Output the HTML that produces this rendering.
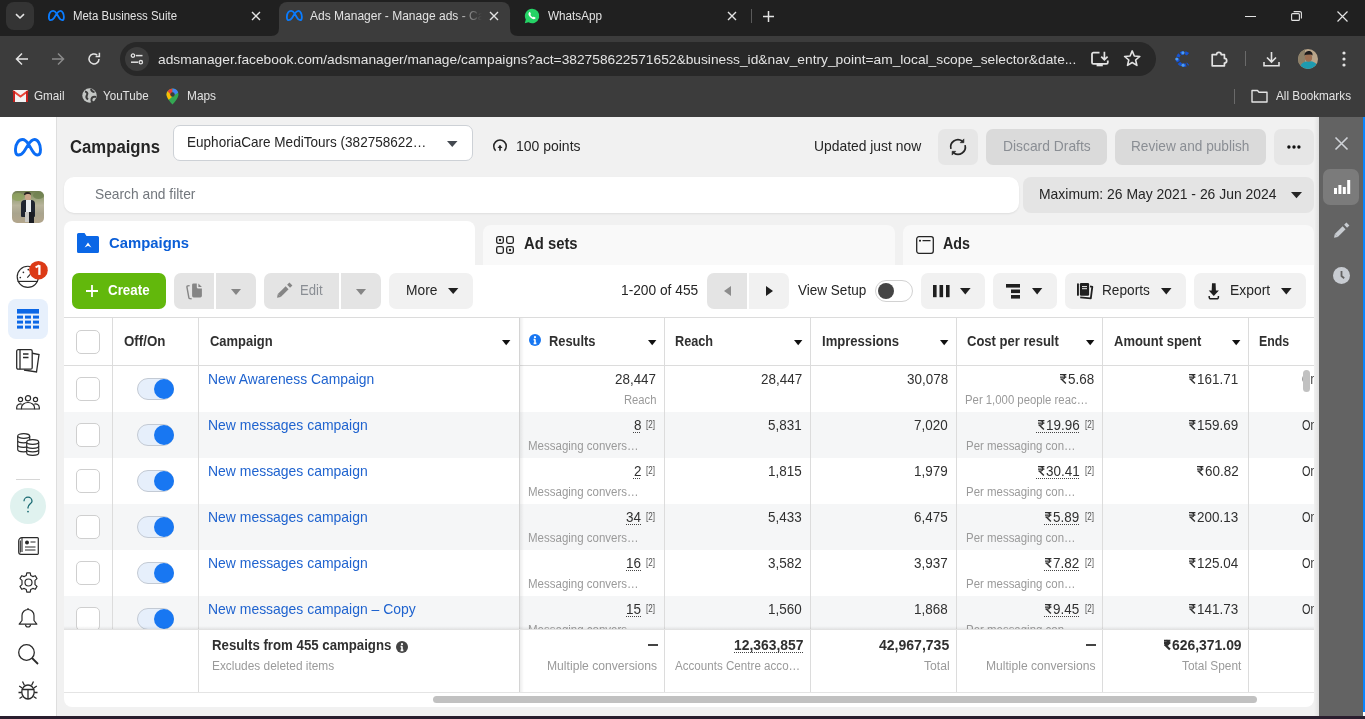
<!DOCTYPE html>
<html><head><meta charset="utf-8">
<style>
*{box-sizing:border-box;margin:0;padding:0}
html,body{width:1365px;height:719px;overflow:hidden;background:#f1f1f1;font-family:"Liberation Sans",sans-serif}
.a{position:absolute}
.t{position:absolute;white-space:nowrap;line-height:1}
svg{position:absolute;overflow:visible}
</style></head><body>
<div class="a" style="left:0px;top:0px;width:1365px;height:36px;background:#202020;"></div>
<div class="a" style="left:0px;top:36px;width:1365px;height:81px;background:#3c3c3c;"></div>
<div class="a" style="left:6px;top:2px;width:28px;height:28px;background:#343434;border-radius:8px;"></div>
<svg style="left:15px;top:13px;" width="10" height="7" viewBox="0 0 10 7"><path d="M1 1.2 L5 5 L9 1.2" stroke="#e3e3e3" stroke-width="1.6" fill="none"/></svg>
<svg style="left:48px;top:10px;" width="17" height="12" viewBox="0 0 17 12"><g transform="scale(0.6)"><path d="M4.2 17C1.8 17 1.3 13.5 1.5 11C1.9 5.5 4.8 1.5 8.5 1.5C11.2 1.5 12.8 3.5 14.5 6.3L18.5 13C20 15.6 21.5 17 23.5 17C25.8 17 26.5 14.5 26.5 11.5C26.5 6 23.8 1.5 20.5 1.5C18 1.5 16.2 3.5 14.2 6.8L10 13.5C8.5 15.8 6.5 17 4.2 17z" stroke="#0a7cff" stroke-width="3" fill="none"/></g></svg>
<div class="t" style="top:10.41px;font-size:12.5px;color:#e3e3e3;left:72.70px;transform:scaleX(0.9127);transform-origin:0 0;">Meta Business Suite</div>
<svg style="left:251px;top:11px;" width="10" height="10" viewBox="0 0 10 10"><path d="M1 1L9 9M9 1L1 9" stroke="#e3e3e3" stroke-width="1.4"/></svg>
<div class="a" style="left:279px;top:2px;width:231px;height:34px;background:#3c3c3c;border-radius:8px 8px 0 0;"></div>
<svg style="left:271px;top:28px;" width="8" height="8" viewBox="0 0 8 8"><path d="M0 8 Q8 8 8 0 L8 8z" fill="#3c3c3c"/></svg>
<svg style="left:510px;top:28px;" width="8" height="8" viewBox="0 0 8 8"><path d="M8 8 Q0 8 0 0 L0 8z" fill="#3c3c3c"/></svg>
<svg style="left:286px;top:10px;" width="17" height="12" viewBox="0 0 17 12"><g transform="scale(0.6)"><path d="M4.2 17C1.8 17 1.3 13.5 1.5 11C1.9 5.5 4.8 1.5 8.5 1.5C11.2 1.5 12.8 3.5 14.5 6.3L18.5 13C20 15.6 21.5 17 23.5 17C25.8 17 26.5 14.5 26.5 11.5C26.5 6 23.8 1.5 20.5 1.5C18 1.5 16.2 3.5 14.2 6.8L10 13.5C8.5 15.8 6.5 17 4.2 17z" stroke="#0a7cff" stroke-width="3" fill="none"/></g></svg>
<div class="a" style="left:300px;top:0;width:182px;height:34px;overflow:hidden;-webkit-mask-image:linear-gradient(90deg,#000 86%,transparent 100%)">
<div class="t" style="left:10px;top:10.41px;font-size:12.5px;color:#e3e3e3;transform:scaleX(0.9616);transform-origin:0 0">Ads Manager - Manage ads - Campaigns</div>
</div>
<svg style="left:489px;top:11px;" width="10" height="10" viewBox="0 0 10 10"><path d="M1 1L9 9M9 1L1 9" stroke="#e3e3e3" stroke-width="1.4"/></svg>
<svg style="left:524px;top:8px;" width="16" height="16" viewBox="0 0 16 16"><path d="M8 0.8A7.2 7.2 0 0 0 1.8 11.6L0.8 15.2 4.5 14.2A7.2 7.2 0 1 0 8 0.8z" fill="#25d366"/><path d="M5.2 4.2c.3-.3.8-.3 1 .1l.7 1.4c.1.3 0 .5-.2.7l-.4.4c.5 1.1 1.4 2 2.5 2.5l.4-.4c.2-.2.5-.3.7-.2l1.4.7c.3.2.4.7.1 1-.9 1-2.3 1-3.6.2A8 8 0 0 1 5 7.8c-.8-1.3-.7-2.7.2-3.6z" fill="#fff"/></svg>
<div class="t" style="top:10.41px;font-size:12.5px;color:#e3e3e3;left:548.00px;transform:scaleX(0.9365);transform-origin:0 0;">WhatsApp</div>
<svg style="left:727px;top:11px;" width="10" height="10" viewBox="0 0 10 10"><path d="M1 1L9 9M9 1L1 9" stroke="#e3e3e3" stroke-width="1.4"/></svg>
<div class="a" style="left:751px;top:9px;width:1px;height:14px;background:#5a5a5a;"></div>
<svg style="left:763px;top:11px;" width="11" height="11" viewBox="0 0 11 11"><path d="M5.5 0V11M0 5.5H11" stroke="#e3e3e3" stroke-width="1.5"/></svg>
<div class="a" style="left:1245px;top:16px;width:11px;height:1px;background:#e3e3e3;"></div>
<svg style="left:1291px;top:11px;" width="11" height="10" viewBox="0 0 11 10"><rect x="0.6" y="2.6" width="7.8" height="6.8" rx="1" stroke="#e3e3e3" stroke-width="1.1" fill="none"/><path d="M2.6 0.6H9a1.4 1.4 0 0 1 1.4 1.4V7.4" stroke="#e3e3e3" stroke-width="1.1" fill="none"/></svg>
<svg style="left:1337px;top:11px;" width="11" height="11" viewBox="0 0 11 11"><path d="M0.5 0.5L10.5 10.5M10.5 0.5L0.5 10.5" stroke="#e3e3e3" stroke-width="1.2"/></svg>
<svg style="left:15px;top:52px;" width="14" height="14" viewBox="0 0 14 14"><path d="M13 7H1.8M7 1.5L1.5 7L7 12.5" stroke="#e3e3e3" stroke-width="1.5" fill="none"/></svg>
<svg style="left:51px;top:52px;" width="14" height="14" viewBox="0 0 14 14"><path d="M1 7H12.2M7 1.5L12.5 7L7 12.5" stroke="#8a8a8a" stroke-width="1.5" fill="none"/></svg>
<svg style="left:87px;top:52px;" width="14" height="14" viewBox="0 0 14 14"><path d="M12 7A5 5 0 1 1 10.2 3.1" stroke="#e3e3e3" stroke-width="1.5" fill="none"/><path d="M12.4 0.8V4.6H8.6" stroke="#e3e3e3" stroke-width="1.5" fill="none"/></svg>
<div class="a" style="left:120px;top:42px;width:1036px;height:34px;background:#282828;border-radius:17px;"></div>
<div class="a" style="left:125px;top:47px;width:24px;height:24px;background:#3c3c3c;border-radius:12px;"></div>
<svg style="left:130px;top:53px;" width="14" height="12" viewBox="0 0 14 12"><circle cx="3" cy="2.6" r="1.7" stroke="#e3e3e3" stroke-width="1.3" fill="none"/><path d="M6 2.6H12.5" stroke="#e3e3e3" stroke-width="1.5"/><circle cx="10.8" cy="9.2" r="1.7" stroke="#e3e3e3" stroke-width="1.3" fill="none"/><path d="M1 9.2H8" stroke="#e3e3e3" stroke-width="1.5"/></svg>
<div class="t" style="top:52.57px;font-size:13.5px;color:#e3e3e3;left:157.50px;transform:scaleX(1.0196);transform-origin:0 0;">adsmanager.facebook.com/adsmanager/manage/campaigns?act=382758622571652&amp;business_id&amp;nav_entry_point=am_local_scope_selector&amp;date...</div>
<svg style="left:1091px;top:51px;" width="18" height="16" viewBox="0 0 18 16"><path d="M8.5 1.7H2.4A1.4 1.4 0 0 0 1 3.1V11.5A1.4 1.4 0 0 0 2.4 12.9H15.4A1.4 1.4 0 0 0 16.8 11.5V9.6" stroke="#e3e3e3" stroke-width="1.8" fill="none"/><rect x="5.6" y="12.9" width="6.2" height="2.4" fill="#e3e3e3"/><path d="M13.4 0.7V8.6M10.2 5.6L13.4 8.8L16.6 5.6" stroke="#e3e3e3" stroke-width="1.7" fill="none"/></svg>
<svg style="left:1124px;top:50.4px;" width="17" height="16" viewBox="0 0 17 16"><path d="M8.20 0.90L10.32 5.99L15.81 6.43L11.62 10.01L12.90 15.37L8.20 12.50L3.50 15.37L4.78 10.01L0.59 6.43L6.08 5.99z" stroke="#e3e3e3" stroke-width="1.6" fill="none" stroke-linejoin="round"/></svg>
<svg style="left:1175px;top:51px;" width="16" height="16" viewBox="0 0 16 16"><path d="M13 3.2A6.3 6.3 0 1 0 13 12.8" stroke="#1553d6" stroke-width="3.4" fill="none" stroke-dasharray="3.2 1.3"/><circle cx="8" cy="1.8" r="1.6" fill="#4a9cf5"/><circle cx="8" cy="14.2" r="1.6" fill="#4a9cf5"/><circle cx="1.8" cy="8" r="1.6" fill="#4a9cf5"/></svg>
<svg style="left:1211px;top:50px;" width="17" height="17" viewBox="0 0 17 17"><path d="M1.2 4.6H5.6A2.3 2.3 0 0 1 10.2 4.6H13.4V8.4A2.3 2.3 0 0 1 13.4 13V15.8H1.2z" stroke="#e3e3e3" stroke-width="1.7" fill="none" stroke-linejoin="round"/></svg>
<div class="a" style="left:1245px;top:51px;width:1px;height:15px;background:#6a6a6a;"></div>
<svg style="left:1263px;top:51px;" width="17" height="16" viewBox="0 0 17 16"><path d="M8.5 1V11M4 6.5L8.5 11L13 6.5M1 11V14.8H16V11" stroke="#e3e3e3" stroke-width="1.6" fill="none"/></svg>
<svg style="left:1298px;top:49px;" width="20" height="20" viewBox="0 0 20 20"><defs><clipPath id="av"><circle cx="10" cy="10" r="10"/></clipPath></defs><g clip-path="url(#av)"><rect width="20" height="20" fill="#b9a58a"/><rect x="0" y="0" width="7" height="20" fill="#8d8068"/><ellipse cx="11" cy="19" rx="9" ry="7" fill="#1e9bb0"/><ellipse cx="10.5" cy="8.5" rx="3.6" ry="4.3" fill="#9c6f52"/><path d="M6.5 6.5C6.5 3 9 2 11 2S15 3.5 14.5 6.5L13 5.5L8 5.8z" fill="#1d1b1c"/></g></svg>
<svg style="left:1342px;top:51px;" width="4" height="16" viewBox="0 0 4 16"><circle cx="2" cy="2" r="1.6" fill="#e3e3e3"/><circle cx="2" cy="8" r="1.6" fill="#e3e3e3"/><circle cx="2" cy="14" r="1.6" fill="#e3e3e3"/></svg>
<svg style="left:13px;top:90px;" width="15" height="12" viewBox="0 0 15 12"><rect x="0" y="0" width="15" height="12" rx="1" fill="#f2f2f2"/><path d="M0 1L7.5 6.5L15 1" stroke="#ea4335" stroke-width="2" fill="none"/><path d="M1 1V12M14 1V12" stroke="#c5221f" stroke-width="2"/></svg>
<div class="t" style="top:89.61px;font-size:12.5px;color:#e3e3e3;left:34.00px;transform:scaleX(0.9345);transform-origin:0 0;">Gmail</div>
<svg style="left:82px;top:88px;" width="15" height="15" viewBox="0 0 15 15"><circle cx="7.5" cy="7.5" r="7.2" fill="#c4c7c5"/><path d="M3 3.5C5 4 6 5.5 5 7S4 10 6 11.5M9 1C9.5 3 11 4 12.5 4M14 9C12 8.5 10 9 9.5 11S10 14 10.5 14.5" stroke="#3c3c3c" stroke-width="2" fill="none"/></svg>
<div class="t" style="top:89.61px;font-size:12.5px;color:#e3e3e3;left:103.00px;transform:scaleX(0.9282);transform-origin:0 0;">YouTube</div>
<svg style="left:166px;top:88px;" width="13" height="17" viewBox="0 0 13 17"><path d="M6.5 0.5A6 6 0 0 0 .5 6.5C.5 10.5 6.5 16.5 6.5 16.5S12.5 10.5 12.5 6.5A6 6 0 0 0 6.5 .5z" fill="#34a853"/><path d="M6.5 0.5A6 6 0 0 0 1.5 3.2L6.5 8.5z" fill="#ea4335"/><path d="M6.5 0.5A6 6 0 0 1 12.2 4.5L6.5 8.5z" fill="#4285f4"/><path d="M.5 6.5C.5 8 1.5 10 2.8 11.8L6.5 8.5 1.5 3.2A6 6 0 0 0 .5 6.5z" fill="#fbbc04"/><circle cx="6.5" cy="6.5" r="2.2" fill="#3c3c3c"/></svg>
<div class="t" style="top:89.61px;font-size:12.5px;color:#e3e3e3;left:187.00px;transform:scaleX(0.9489);transform-origin:0 0;">Maps</div>
<div class="a" style="left:1234px;top:89px;width:1px;height:15px;background:#6a6a6a;"></div>
<svg style="left:1251px;top:89px;" width="17" height="14" viewBox="0 0 17 14"><path d="M1 1.5H6.5L8 3.2H16V13H1z" stroke="#e3e3e3" stroke-width="1.4" fill="none" stroke-linejoin="round"/></svg>
<div class="t" style="top:89.61px;font-size:12.5px;color:#e3e3e3;left:1276.00px;transform:scaleX(0.9388);transform-origin:0 0;">All Bookmarks</div>
<div class="a" style="left:0px;top:117px;width:56px;height:599px;background:#ffffff;"></div>
<div class="a" style="left:56px;top:117px;width:1px;height:599px;background:#dedede;"></div>
<div class="a" style="left:1314px;top:117px;width:5px;height:599px;background:linear-gradient(90deg,#f1f1f1,#e0e0e0);"></div>
<div class="a" style="left:1319px;top:117px;width:44px;height:599px;background:#636363;"></div>
<div class="a" style="left:1363px;top:117px;width:2px;height:595px;background:#0a84ff;"></div>
<div class="a" style="left:1363px;top:712px;width:2px;height:4px;background:#ffffff;"></div>
<div class="a" style="left:0px;top:716px;width:1365px;height:3px;background:#2a1e2e;"></div>
<svg style="left:14px;top:137.5px;" width="28" height="19" viewBox="0 0 28 19"><path d="M4.2 17C1.8 17 1.3 13.5 1.5 11C1.9 5.5 4.8 1.5 8.5 1.5C11.2 1.5 12.8 3.5 14.5 6.3L18.5 13C20 15.6 21.5 17 23.5 17C25.8 17 26.5 14.5 26.5 11.5C26.5 6 23.8 1.5 20.5 1.5C18 1.5 16.2 3.5 14.2 6.8L10 13.5C8.5 15.8 6.5 17 4.2 17z" stroke="#0a6cf5" stroke-width="2.9" fill="none" stroke-linejoin="round"/></svg>
<div class="a" style="left:12px;top:191px;width:32px;height:32px;border-radius:5px;overflow:hidden;background:linear-gradient(180deg,#6f7d4f 0%,#9aa27a 22%,#b8b49c 45%,#a9a48e 70%,#b3a68c 100%)">
<div class="a" style="left:0;top:2px;width:12px;height:8px;background:#8fa25e;border-radius:50%;opacity:.8"></div>
<div class="a" style="left:21px;top:1px;width:11px;height:7px;background:#6e7f4f;border-radius:50%;opacity:.8"></div>
<div class="a" style="left:12px;top:1px;width:7px;height:3px;background:#2a2420;border-radius:3px 3px 0 0"></div>
<div class="a" style="left:12.5px;top:3px;width:6px;height:6px;background:#caa58a;border-radius:2px"></div>
<div class="a" style="left:9px;top:8.5px;width:14px;height:17px;background:#1e2430;border-radius:4px 4px 1px 1px"></div>
<div class="a" style="left:14px;top:8.5px;width:5px;height:13px;background:#e8ecef"></div>
<div class="a" style="left:13px;top:21px;width:4px;height:10px;background:#c9c8c4"></div>
<div class="a" style="left:17px;top:21px;width:5px;height:11px;background:#1a1c22"></div>
</div>
<svg style="left:16px;top:265px;" width="24" height="24" viewBox="0 0 24 24"><circle cx="11.8" cy="11.8" r="10.6" stroke="#2a2a2a" stroke-width="1.15" fill="none"/><path d="M1.6 16.4H22" stroke="#2a2a2a" stroke-width="1.15"/><path d="M11.3 12.6L14.2 9.4" stroke="#2a2a2a" stroke-width="1.15"/><circle cx="4.3" cy="12.5" r="0.85" fill="#2a2a2a"/><circle cx="7.4" cy="7.3" r="0.85" fill="#2a2a2a"/><circle cx="12.3" cy="4.6" r="0.85" fill="#2a2a2a"/></svg>
<svg style="left:29.2px;top:260.8px;" width="19" height="19" viewBox="0 0 19 19"><circle cx="9.45" cy="9.2" r="9.3" fill="#dc3a16"/><path d="M10.4 4.2V13.9" stroke="#fff" stroke-width="2.3"/><path d="M6.6 6.4L10.4 4.4" stroke="#fff" stroke-width="2"/></svg>
<div class="a" style="left:8px;top:299px;width:40px;height:40px;background:#e7f0fc;border-radius:8px;"></div>
<svg style="left:17px;top:309px;" width="22" height="20" viewBox="0 0 22 20"><rect x="0" y="0" width="22" height="4.6" fill="#0b67e6"/><g fill="#0b67e6"><rect x="0" y="6.6" width="6" height="3"/><rect x="8" y="6.6" width="6" height="3"/><rect x="16" y="6.6" width="6" height="3"/><rect x="0" y="11.6" width="6" height="3"/><rect x="8" y="11.6" width="6" height="3"/><rect x="16" y="11.6" width="6" height="3"/><rect x="0" y="16.6" width="6" height="3"/><rect x="8" y="16.6" width="6" height="3"/><rect x="16" y="16.6" width="6" height="3"/></g></svg>
<svg style="left:16px;top:349px;" width="24" height="24" viewBox="0 0 24 24"><path d="M15 4L23 5.5L20.5 23L8 21" stroke="#2a2a2a" stroke-width="1.3" fill="none"/><rect x="0.7" y="0.7" width="15.5" height="19.5" rx="1.5" stroke="#2a2a2a" stroke-width="1.3" fill="#fff"/><path d="M4 0.7V20.2M7 5H12.5M7 8.5H12.5" stroke="#2a2a2a" stroke-width="1.3"/></svg>
<svg style="left:16px;top:395px;" width="24" height="15" viewBox="0 0 24 15"><circle cx="12" cy="3.2" r="2.6" stroke="#2a2a2a" stroke-width="1.2" fill="none"/><circle cx="4.5" cy="4.5" r="2.1" stroke="#2a2a2a" stroke-width="1.2" fill="none"/><circle cx="19.5" cy="4.5" r="2.1" stroke="#2a2a2a" stroke-width="1.2" fill="none"/><path d="M5.5 14V12.5A6.5 5 0 0 1 18.5 12.5V14z" stroke="#2a2a2a" stroke-width="1.2" fill="none"/><path d="M5.8 9.2A3.6 3.6 0 0 0 0.7 12.5V14H5.5M18.2 9.2A3.6 3.6 0 0 1 23.3 12.5V14H18.5" stroke="#2a2a2a" stroke-width="1.2" fill="none"/></svg>
<svg style="left:17px;top:433px;" width="23" height="23" viewBox="0 0 23 23"><g stroke="#2a2a2a" stroke-width="1.2" fill="#fff"><path d="M0.7 3V16.5A6 2.3 0 0 0 12.7 16.5V3"/><ellipse cx="6.7" cy="3" rx="6" ry="2.3"/><path d="M0.7 7.5A6 2.3 0 0 0 12.7 7.5M0.7 12A6 2.3 0 0 0 12.7 12"/><path d="M9.7 9V20A6 2.3 0 0 0 21.7 20V9"/><ellipse cx="15.7" cy="9" rx="6" ry="2.3"/><path d="M9.7 13A6 2.3 0 0 0 21.7 13M9.7 16.5A6 2.3 0 0 0 21.7 16.5"/></g></svg>
<div class="a" style="left:16px;top:479px;width:24px;height:1px;background:#d6d6d6;"></div>
<div class="a" style="left:10px;top:488px;width:36px;height:36px;background:#e0f2ef;border-radius:18px;"></div>
<svg style="left:23px;top:497px;" width="10" height="16" viewBox="0 0 10 16"><path d="M1 4.2A4 4 0 0 1 9 4.2C9 6.6 5 7.2 5 10.5V11.5" stroke="#1b6b73" stroke-width="1.3" fill="none"/><circle cx="5" cy="14.6" r="0.9" fill="#1b6b73"/></svg>
<svg style="left:18px;top:537px;" width="21" height="18" viewBox="0 0 21 18"><path d="M4 0.7H19.5A0.8 0.8 0 0 1 20.3 1.5V16.5A0.8 0.8 0 0 1 19.5 17.3H3A2.3 2.3 0 0 1 0.7 15V4A3.3 3.3 0 0 1 4 0.7z" stroke="#2a2a2a" stroke-width="1.2" fill="none"/><path d="M4 0.7V15M2.3 3.5V15.5" stroke="#2a2a2a" stroke-width="1.1"/><circle cx="9" cy="5.5" r="2" fill="#2a2a2a"/><path d="M7 10H17.5M7 13H17.5M12.5 5H17.5" stroke="#2a2a2a" stroke-width="1.2"/></svg>
<svg style="left:18px;top:572px;" width="21" height="21" viewBox="0 0 21 21"><path d="M8.8 0.8H12.2L12.7 3.4L14.8 4.6L17.3 3.7L19 6.6L17 8.4V12.6L19 14.4L17.3 17.3L14.8 16.4L12.7 17.6L12.2 20.2H8.8L8.3 17.6L6.2 16.4L3.7 17.3L2 14.4L4 12.6V8.4L2 6.6L3.7 3.7L6.2 4.6L8.3 3.4z" stroke="#2a2a2a" stroke-width="1.2" fill="none" stroke-linejoin="round"/><circle cx="10.5" cy="10.5" r="3.5" stroke="#2a2a2a" stroke-width="1.2" fill="none"/></svg>
<svg style="left:18px;top:608px;" width="20" height="21" viewBox="0 0 20 21"><path d="M10 1.5A6 6 0 0 0 4 7.5V12.5L1.2 16.2H18.8L16 12.5V7.5A6 6 0 0 0 10 1.5z" stroke="#2a2a2a" stroke-width="1.2" fill="none" stroke-linejoin="round"/><path d="M10 0V1.5M7.5 16.5A2.5 2.5 0 0 0 12.5 16.5" stroke="#2a2a2a" stroke-width="1.2" fill="none"/></svg>
<svg style="left:18px;top:644px;" width="21" height="21" viewBox="0 0 21 21"><circle cx="8.5" cy="8.5" r="7.8" stroke="#2a2a2a" stroke-width="1.3" fill="none"/><path d="M14 14L20 20" stroke="#2a2a2a" stroke-width="1.8"/></svg>
<svg style="left:18px;top:680px;" width="20" height="20" viewBox="0 0 20 20"><ellipse cx="10" cy="12" rx="6.2" ry="7" stroke="#2a2a2a" stroke-width="1.3" fill="none"/><path d="M3.8 9.5H16.2M10 9.5V19M6.5 5.5L4.5 1.5M13.5 5.5L15.5 1.5M3.8 12.5H0.5M16.2 12.5H19.5M4.5 16.5L1.5 18.5M15.5 16.5L18.5 18.5M4.2 8L1.2 6M15.8 8L18.8 6" stroke="#2a2a2a" stroke-width="1.3" fill="none"/></svg>
<svg style="left:1335px;top:137px;" width="13" height="13" viewBox="0 0 13 13"><path d="M0.5 0.5L12.5 12.5M12.5 0.5L0.5 12.5" stroke="#d0d3d8" stroke-width="1.6"/></svg>
<div class="a" style="left:1323px;top:169px;width:36px;height:36px;background:#7b7b7b;border-radius:7px;"></div>
<svg style="left:1334px;top:180px;" width="16" height="14" viewBox="0 0 16 14"><g fill="#ffffff"><rect x="0" y="8" width="3" height="6"/><rect x="4.4" y="5" width="3" height="9"/><rect x="8.8" y="7" width="3" height="7"/><rect x="13.2" y="0" width="3" height="14"/></g></svg>
<svg style="left:1333px;top:222px;" width="17" height="17" viewBox="0 0 17 17"><path d="M3.3 13.4L11.1 5.7" stroke="#c8ccd1" stroke-width="4.2"/><path d="M4.8 14.9L1.8 11.9L1 15.7z" fill="#c8ccd1"/><path d="M12.6 4.2L14.9 1.9" stroke="#c8ccd1" stroke-width="4.2"/></svg>
<svg style="left:1333px;top:267px;" width="17" height="17" viewBox="0 0 17 17"><circle cx="8.5" cy="8.5" r="8.5" fill="#c8ccd2"/><path d="M8.5 4V9L11.2 11.2" stroke="#636363" stroke-width="1.8" fill="none"/></svg>
<div class="t" style="top:138.15px;font-size:18px;color:#252525;font-weight:bold;left:69.60px;transform:scaleX(0.9276);transform-origin:0 0;">Campaigns</div>
<div class="a" style="left:173px;top:125px;width:300px;height:36px;background:#fff;border:1px solid #cdd1d6;border-radius:7px"></div>
<div class="t" style="top:135.02px;font-size:14.5px;color:#252525;left:187.00px;transform:scaleX(0.9340);transform-origin:0 0;">EuphoriaCare MediTours (382758622…</div>
<svg style="left:447px;top:140.5px;" width="10.5" height="6" viewBox="0 0 10.5 6"><path d="M0 0H10.5L5.25 6z" fill="#444950"/></svg>
<svg style="left:493px;top:140px;" width="14" height="13" viewBox="0 0 14 13"><path d="M2.6 10.7A6.25 6.25 0 1 1 11.4 10.7" stroke="#252525" stroke-width="1.5" fill="none"/><path d="M7 10.8V5.6" stroke="#252525" stroke-width="1.6"/><path d="M4.5 8L7 5.1L9.5 8z" fill="#252525"/></svg>
<div class="t" style="top:138.52px;font-size:14.5px;color:#252525;left:516.10px;transform:scaleX(0.9639);transform-origin:0 0;">100 points</div>
<div class="t" style="top:138.92px;font-size:14.5px;color:#252525;left:814.30px;transform:scaleX(0.9564);transform-origin:0 0;">Updated just now</div>
<div class="a" style="left:938px;top:129px;width:40px;height:36px;background:#e6e6e6;border-radius:7px;"></div>
<svg style="left:949px;top:138px;" width="18" height="18" viewBox="0 0 18 18"><path d="M1.95 10.89A7.3 7.3 0 0 1 13.2 3" stroke="#252525" stroke-width="1.7" fill="none"/><path d="M11.2 4.7L14.9 4.7L14.9 0.9z" fill="#252525" stroke="#252525" stroke-width="0.6" stroke-linejoin="round"/><path d="M16.05 7.11A7.3 7.3 0 0 1 4.8 15" stroke="#252525" stroke-width="1.7" fill="none"/><path d="M6.8 13.3L3.1 13.3L3.1 17.1z" fill="#252525" stroke="#252525" stroke-width="0.6" stroke-linejoin="round"/></svg>
<div class="a" style="left:986px;top:129px;width:121px;height:36px;background:#dadada;border-radius:7px;"></div>
<div class="t" style="top:138.52px;font-size:14.5px;color:#8a8e94;left:1002.50px;transform:scaleX(0.9547);transform-origin:0 0;">Discard Drafts</div>
<div class="a" style="left:1115px;top:129px;width:151px;height:36px;background:#dadada;border-radius:7px;"></div>
<div class="t" style="top:138.52px;font-size:14.5px;color:#8a8e94;left:1131.10px;transform:scaleX(0.9416);transform-origin:0 0;">Review and publish</div>
<div class="a" style="left:1274px;top:129px;width:40px;height:36px;background:#e6e6e6;border-radius:7px;"></div>
<svg style="left:1287px;top:145px;" width="14" height="4" viewBox="0 0 14 4"><circle cx="1.9" cy="2" r="1.7" fill="#111"/><circle cx="7" cy="2" r="1.7" fill="#111"/><circle cx="11.9" cy="2" r="1.7" fill="#111"/></svg>
<div class="a" style="left:64px;top:177px;width:955px;height:35.5px;background:#ffffff;border-radius:10px;box-shadow:0 1px 2px rgba(0,0,0,0.08);"></div>
<div class="t" style="top:187.22px;font-size:14.5px;color:#72777d;left:94.50px;transform:scaleX(0.9509);transform-origin:0 0;">Search and filter</div>
<div class="a" style="left:1023px;top:177px;width:291px;height:35.5px;background:#e4e4e4;border-radius:8px;"></div>
<div class="t" style="top:186.72px;font-size:14.5px;color:#252525;left:1039.00px;transform:scaleX(0.9598);transform-origin:0 0;">Maximum: 26 May 2021 - 26 Jun 2024</div>
<svg style="left:1290.6px;top:192px;" width="11" height="6.2" viewBox="0 0 11 6.2"><path d="M0 0H11L5.5 6.2z" fill="#252525"/></svg>
<div class="a" style="left:475px;top:220px;width:840px;height:46px;background:#f1f1f1"></div>
<div class="a" style="left:483px;top:225px;width:412px;height:40px;background:#f9f9f9;border-radius:8px 8px 0 0;"></div>
<div class="a" style="left:903px;top:225px;width:411px;height:40px;background:#f9f9f9;border-radius:8px 8px 0 0;"></div>
<div class="a" style="left:64px;top:221px;width:411px;height:60px;background:#ffffff;border-radius:8px 8px 0 0;"></div>
<div class="a" style="left:64px;top:265px;width:1250px;height:442px;background:#ffffff;border-radius:0 0 8px 8px;"></div>
<svg style="left:77px;top:233px;" width="22" height="20" viewBox="0 0 22 20"><path d="M0 1.5A1.5 1.5 0 0 1 1.5 0H7.5L9.5 3H20.5A1.5 1.5 0 0 1 22 4.5V18.5A1.5 1.5 0 0 1 20.5 20H1.5A1.5 1.5 0 0 1 0 18.5z" fill="#0b67e6"/><path d="M7.6 14.5L11 9.5L14.4 14.5L11 12.8z" fill="#fff"/></svg>
<div class="t" style="top:234.59px;font-size:15px;color:#0a5ed7;font-weight:bold;left:108.80px;transform:scaleX(0.9907);transform-origin:0 0;">Campaigns</div>
<svg style="left:496px;top:236px;" width="18" height="18" viewBox="0 0 18 18"><g stroke="#252525" stroke-width="1.3" fill="none"><rect x="0.65" y="0.65" width="6.7" height="6.7" rx="1.8"/><rect x="10.65" y="0.65" width="6.7" height="6.7" rx="1.8"/><rect x="0.65" y="10.65" width="6.7" height="6.7" rx="1.8"/><rect x="10.65" y="10.65" width="6.7" height="6.7" rx="1.8"/></g><circle cx="4" cy="4" r="1.2" fill="#252525"/><circle cx="14" cy="14" r="1.2" fill="#252525"/></svg>
<div class="t" style="top:236.35px;font-size:16px;color:#252525;font-weight:bold;left:523.80px;transform:scaleX(0.9275);transform-origin:0 0;">Ad sets</div>
<svg style="left:916px;top:236px;" width="18" height="18" viewBox="0 0 18 18"><rect x="0.7" y="0.7" width="16.6" height="16.6" rx="2.2" stroke="#252525" stroke-width="1.3" fill="none"/><path d="M6.5 4.7H14.5M3 4.7H5M4 3.7V5.7" stroke="#252525" stroke-width="1.2"/></svg>
<div class="t" style="top:236.35px;font-size:16px;color:#252525;font-weight:bold;left:943.00px;transform:scaleX(0.8933);transform-origin:0 0;">Ads</div>
<div class="a" style="left:72px;top:273px;width:94px;height:36px;background:#62b80c;border-radius:7px;"></div>
<svg style="left:86px;top:285px;" width="12" height="12" viewBox="0 0 12 12"><path d="M6 0V12M0 6H12" stroke="#fff" stroke-width="1.8"/></svg>
<div class="t" style="top:283.14px;font-size:14px;color:#ffffff;font-weight:bold;left:108.10px;transform:scaleX(0.9545);transform-origin:0 0;">Create</div>
<div class="a" style="left:174px;top:273px;width:40px;height:36px;background:#e4e4e4;border-radius:7px 0 0 7px;"></div>
<div class="a" style="left:216px;top:273px;width:40px;height:36px;background:#e4e4e4;border-radius:0 7px 7px 0;"></div>
<svg style="left:185px;top:282.5px;" width="18" height="17" viewBox="0 0 18 17"><path d="M7.1 1.8A1.4 1.4 0 0 1 8.5 0.4H11.8V4.2A1.4 1.4 0 0 0 13.2 5.6H16.9V12.8A1.6 1.6 0 0 1 15.3 14.4H8.7A1.6 1.6 0 0 1 7.1 12.8z" fill="#858585"/><path d="M13.4 0.5L16.9 4.1H13.4z" fill="#858585"/><path d="M4.6 2.6L2.7 2.9A1 1 0 0 0 1.9 4L3.9 14.8A1 1 0 0 0 4.9 15.6L6.7 15.9" stroke="#858585" stroke-width="1.4" fill="none"/></svg>
<svg style="left:231px;top:288.5px;" width="10" height="6" viewBox="0 0 10 6"><path d="M0 0H10L5.0 6z" fill="#858585"/></svg>
<div class="a" style="left:264px;top:273px;width:75px;height:36px;background:#e4e4e4;border-radius:7px 0 0 7px;"></div>
<div class="a" style="left:341px;top:273px;width:40px;height:36px;background:#e4e4e4;border-radius:0 7px 7px 0;"></div>
<svg style="left:276px;top:282px;" width="17" height="17" viewBox="0 0 17 17"><path d="M3.3 13.4L11.1 5.7" stroke="#858585" stroke-width="4.2"/><path d="M4.8 14.9L1.8 11.9L1 15.7z" fill="#858585"/><path d="M12.6 4.2L14.9 1.9" stroke="#858585" stroke-width="4.2"/></svg>
<div class="t" style="top:282.72px;font-size:14.5px;color:#8a8e94;left:300.30px;transform:scaleX(0.9046);transform-origin:0 0;">Edit</div>
<svg style="left:356px;top:288.5px;" width="10" height="6" viewBox="0 0 10 6"><path d="M0 0H10L5.0 6z" fill="#858585"/></svg>
<div class="a" style="left:389px;top:273px;width:84px;height:36px;background:#f1f1f1;border-radius:7px;"></div>
<div class="t" style="top:282.72px;font-size:14.5px;color:#252525;left:405.90px;transform:scaleX(0.9506);transform-origin:0 0;">More</div>
<svg style="left:447.8px;top:288.3px;" width="10.4" height="6" viewBox="0 0 10.4 6"><path d="M0 0H10.4L5.2 6z" fill="#1f1f1f"/></svg>
<div class="t" style="top:282.72px;font-size:14.5px;color:#252525;left:621.40px;transform:scaleX(0.9480);transform-origin:0 0;">1-200 of 455</div>
<div class="a" style="left:707px;top:273px;width:40px;height:36px;background:#e4e4e4;border-radius:7px 0 0 7px;"></div>
<div class="a" style="left:749px;top:273px;width:40px;height:36px;background:#f1f1f1;border-radius:0 7px 7px 0;"></div>
<svg style="left:723.5px;top:286px;" width="7" height="10" viewBox="0 0 7 10"><path d="M7 0V10L0 5z" fill="#8c8c8c"/></svg>
<svg style="left:766px;top:286px;" width="7" height="10" viewBox="0 0 7 10"><path d="M0 0V10L7 5z" fill="#1f1f1f"/></svg>
<div class="t" style="top:282.72px;font-size:14.5px;color:#252525;left:798.00px;transform:scaleX(0.9330);transform-origin:0 0;">View Setup</div>
<div class="a" style="left:875px;top:280px;width:38px;height:21.5px;border:1px solid #d2d2d2;border-radius:11px;background:#fff"></div>
<div class="a" style="left:878px;top:282.5px;width:16px;height:16px;background:#444444;border-radius:8px;"></div>
<div class="a" style="left:921px;top:273px;width:64px;height:36px;background:#f1f1f1;border-radius:7px;"></div>
<svg style="left:932.5px;top:285px;" width="17" height="12.2" viewBox="0 0 17 12.2"><g fill="#1f1f1f"><rect x="0" y="0" width="3.6" height="12.2"/><rect x="6.5" y="0" width="3.6" height="12.2"/><rect x="13" y="0" width="3.6" height="12.2"/></g></svg>
<svg style="left:959.7px;top:287.8px;" width="10.6" height="6.5" viewBox="0 0 10.6 6.5"><path d="M0 0H10.6L5.3 6.5z" fill="#1f1f1f"/></svg>
<div class="a" style="left:993px;top:273px;width:64px;height:36px;background:#f1f1f1;border-radius:7px;"></div>
<svg style="left:1006px;top:283.6px;" width="14" height="14.6" viewBox="0 0 14 14.6"><g fill="#1f1f1f"><rect x="0" y="0" width="14" height="3.6"/><rect x="5" y="5.5" width="9" height="3.6"/><rect x="5" y="11" width="9" height="3.6"/></g></svg>
<svg style="left:1031.8px;top:287.8px;" width="10.3" height="6.5" viewBox="0 0 10.3 6.5"><path d="M0 0H10.3L5.15 6.5z" fill="#1f1f1f"/></svg>
<div class="a" style="left:1065px;top:273px;width:121px;height:36px;background:#f1f1f1;border-radius:7px;"></div>
<svg style="left:1077px;top:282.9px;" width="17" height="17" viewBox="0 0 17 17"><rect x="0" y="0.3" width="1.9" height="12.5" rx="0.9" fill="#1f1f1f"/><rect x="2.9" y="0" width="9.2" height="12.8" rx="1.2" fill="#1f1f1f"/><path d="M5 3.6H10M5 5.7H10" stroke="#f1f1f1" stroke-width="1"/><path d="M13 3.3L15.3 3.8L13.8 15.4L3.2 14.4" stroke="#1f1f1f" stroke-width="1.8" fill="none" stroke-linejoin="round"/></svg>
<div class="t" style="top:282.92px;font-size:14.5px;color:#252525;left:1101.50px;transform:scaleX(0.9416);transform-origin:0 0;">Reports</div>
<svg style="left:1161px;top:288px;" width="10.5" height="6.5" viewBox="0 0 10.5 6.5"><path d="M0 0H10.5L5.25 6.5z" fill="#1f1f1f"/></svg>
<div class="a" style="left:1194px;top:273px;width:112px;height:36px;background:#f1f1f1;border-radius:7px;"></div>
<svg style="left:1208.3px;top:282.7px;" width="13" height="17" viewBox="0 0 13 17"><path d="M4 0.3H7.6L7.9 7.6H10.9L5.8 12.9L0.7 7.6H3.7z" fill="#1f1f1f"/><path d="M1.2 13.1V14.3A1.5 1.5 0 0 0 2.7 15.8H8.9A1.5 1.5 0 0 0 10.4 14.3V13.1" stroke="#1f1f1f" stroke-width="1.5" fill="none"/></svg>
<div class="t" style="top:282.92px;font-size:14.5px;color:#252525;left:1230.00px;transform:scaleX(0.9593);transform-origin:0 0;">Export</div>
<svg style="left:1281px;top:288px;" width="10.6" height="6.5" viewBox="0 0 10.6 6.5"><path d="M0 0H10.6L5.3 6.5z" fill="#1f1f1f"/></svg>
<div class="a" style="left:64px;top:412px;width:1250px;height:46px;background:#f5f6f7;"></div>
<div class="a" style="left:64px;top:504px;width:1250px;height:46px;background:#f5f6f7;"></div>
<div class="a" style="left:64px;top:596px;width:1250px;height:33px;background:#f5f6f7;"></div>
<div class="a" style="left:64px;top:317px;width:1250px;height:1px;background:#dcdcdc;"></div>
<div class="a" style="left:64px;top:365px;width:1250px;height:1px;background:#dcdcdc;"></div>
<div class="a" style="left:112px;top:318px;width:1px;height:311px;background:#dcdcdc;"></div>
<div class="a" style="left:198px;top:318px;width:1px;height:311px;background:#dcdcdc;"></div>
<div class="a" style="left:664px;top:318px;width:1px;height:311px;background:#dcdcdc;"></div>
<div class="a" style="left:810px;top:318px;width:1px;height:311px;background:#dcdcdc;"></div>
<div class="a" style="left:956px;top:318px;width:1px;height:311px;background:#dcdcdc;"></div>
<div class="a" style="left:1102px;top:318px;width:1px;height:311px;background:#dcdcdc;"></div>
<div class="a" style="left:1248px;top:318px;width:1px;height:311px;background:#dcdcdc;"></div>
<div class="a" style="left:519px;top:318px;width:1px;height:311px;background:#d4d4d4;"></div>
<div class="a" style="left:520px;top:318px;width:4px;height:311px;background:linear-gradient(90deg,rgba(0,0,0,0.07),rgba(0,0,0,0));"></div>
<div class="a" style="left:76px;top:330px;width:24px;height:24px;border:1px solid #cfcfcf;border-radius:5px;background:#fff"></div>
<div class="t" style="top:334.24px;font-size:14px;color:#303030;font-weight:bold;left:123.50px;transform:scaleX(0.9508);transform-origin:0 0;">Off/On</div>
<div class="t" style="top:334.24px;font-size:14px;color:#303030;font-weight:bold;left:209.70px;transform:scaleX(0.9250);transform-origin:0 0;">Campaign</div>
<svg style="left:501.8px;top:340px;" width="8.4" height="5.2" viewBox="0 0 8.4 5.2"><path d="M0 0H8.4L4.2 5.2z" fill="#111"/></svg>
<svg style="left:529px;top:334px;" width="12" height="12" viewBox="0 0 12 12"><circle cx="6" cy="6" r="6" fill="#1877f2"/><circle cx="6" cy="3.2" r="1.1" fill="#fff"/><path d="M6 5.2V9.6M4.6 5.6H6M4.6 9.4H7.4" stroke="#fff" stroke-width="1.6"/></svg>
<div class="t" style="top:334.24px;font-size:14px;color:#303030;font-weight:bold;left:549.30px;transform:scaleX(0.9196);transform-origin:0 0;">Results</div>
<svg style="left:647.6px;top:340px;" width="8.4" height="5.2" viewBox="0 0 8.4 5.2"><path d="M0 0H8.4L4.2 5.2z" fill="#111"/></svg>
<div class="t" style="top:334.24px;font-size:14px;color:#303030;font-weight:bold;left:675.40px;transform:scaleX(0.9068);transform-origin:0 0;">Reach</div>
<svg style="left:793.8px;top:340px;" width="8.4" height="5.2" viewBox="0 0 8.4 5.2"><path d="M0 0H8.4L4.2 5.2z" fill="#111"/></svg>
<div class="t" style="top:334.24px;font-size:14px;color:#303030;font-weight:bold;left:821.50px;transform:scaleX(0.9336);transform-origin:0 0;">Impressions</div>
<svg style="left:940px;top:340px;" width="8.4" height="5.2" viewBox="0 0 8.4 5.2"><path d="M0 0H8.4L4.2 5.2z" fill="#111"/></svg>
<div class="t" style="top:334.24px;font-size:14px;color:#303030;font-weight:bold;left:967.40px;transform:scaleX(0.9292);transform-origin:0 0;">Cost per result</div>
<svg style="left:1085.6px;top:340px;" width="8.4" height="5.2" viewBox="0 0 8.4 5.2"><path d="M0 0H8.4L4.2 5.2z" fill="#111"/></svg>
<div class="t" style="top:334.24px;font-size:14px;color:#303030;font-weight:bold;left:1113.60px;transform:scaleX(0.9277);transform-origin:0 0;">Amount spent</div>
<svg style="left:1232px;top:340px;" width="8.4" height="5.2" viewBox="0 0 8.4 5.2"><path d="M0 0H8.4L4.2 5.2z" fill="#111"/></svg>
<div class="t" style="top:334.24px;font-size:14px;color:#303030;font-weight:bold;left:1259.00px;transform:scaleX(0.8823);transform-origin:0 0;">Ends</div>
<div class="a" id="rowsclip" style="left:0;top:0;width:1365px;height:629px;overflow:hidden">
<div class="a" style="left:76px;top:377px;width:24px;height:24px;border:1px solid #cfcfcf;border-radius:5px;background:#fff"></div>
<div class="a" style="left:137px;top:378px;width:37px;height:22px;border:1px solid #c3cad4;border-radius:11px;background:#e6effb"></div>
<div class="a" style="left:154px;top:379px;width:20.3px;height:20.3px;background:#1877f2;border-radius:10.15px;"></div>
<div class="t" style="top:371.52px;font-size:14.5px;color:#1f63cf;left:207.90px;transform:scaleX(0.9567);transform-origin:0 0;">New Awareness Campaign</div>
<div class="t" style="top:371.94px;font-size:14px;color:#303030;left:614.70px;transform:scaleX(0.9574);transform-origin:0 0;">28,447</div>
<div class="t" style="top:394.01px;font-size:12.5px;color:#9a9a9a;left:623.50px;transform:scaleX(0.8993);transform-origin:0 0;">Reach</div>
<div class="t" style="top:371.94px;font-size:14px;color:#303030;left:760.89px;transform:scaleX(0.9600);transform-origin:0 0;">28,447</div>
<div class="t" style="top:371.94px;font-size:14px;color:#303030;left:906.59px;transform:scaleX(0.9600);transform-origin:0 0;">30,078</div>
<div class="t" style="top:371.94px;font-size:14px;color:#303030;left:1067.85px;transform:scaleX(0.9600);transform-origin:0 0;">5.68</div>
<svg style="left:1059.55px;top:373.80px" width="6.40" height="10.00" viewBox="0 0 6.40 10.00"><g transform="scale(1.0000)" stroke="#303030" stroke-width="1.25" fill="none"><path d="M0 0.7H6.4M0 3H6.4"/><path d="M2.6 0.7C5.6 0.7 5.6 5 2.6 5H0.3"/><path d="M1.3 5L5.9 9.6" stroke-width="1.44"/></g></svg>
<div class="t" style="top:394.01px;font-size:12.5px;color:#9a9a9a;left:965.20px;transform:scaleX(0.9077);transform-origin:0 0;">Per 1,000 people reac…</div>
<div class="t" style="top:371.94px;font-size:14px;color:#303030;left:1197.49px;transform:scaleX(0.9600);transform-origin:0 0;">161.71</div>
<svg style="left:1189.19px;top:373.80px" width="6.40" height="10.00" viewBox="0 0 6.40 10.00"><g transform="scale(1.0000)" stroke="#303030" stroke-width="1.25" fill="none"><path d="M0 0.7H6.4M0 3H6.4"/><path d="M2.6 0.7C5.6 0.7 5.6 5 2.6 5H0.3"/><path d="M1.3 5L5.9 9.6" stroke-width="1.44"/></g></svg>
<div class="a" style="left:1249px;top:366px;width:65px;height:46px;overflow:hidden">
<div class="t" style="left:53.40000000000009px;top:5.94px;font-size:14px;color:#303030;transform:scaleX(0.78);transform-origin:0 0">Ongoing</div>
</div>
<div class="a" style="left:1303px;top:370px;width:7px;height:22px;background:#c1c1c1;border-radius:3.5px;"></div>
<div class="a" style="left:76px;top:423px;width:24px;height:24px;border:1px solid #cfcfcf;border-radius:5px;background:#fff"></div>
<div class="a" style="left:137px;top:424px;width:37px;height:22px;border:1px solid #c3cad4;border-radius:11px;background:#e6effb"></div>
<div class="a" style="left:154px;top:425px;width:20.3px;height:20.3px;background:#1877f2;border-radius:10.15px;"></div>
<div class="t" style="top:417.52px;font-size:14.5px;color:#1f63cf;left:207.90px;transform:scaleX(0.9619);transform-origin:0 0;">New messages campaign</div>
<div class="t" style="top:417.94px;font-size:14px;color:#303030;left:633.93px;transform:scaleX(0.9600);transform-origin:0 0;">8</div>
<div class="a" style="left:633px;top:432px;width:8px;height:1px;background:repeating-linear-gradient(90deg,#444 0 1px,transparent 1px 2px);"></div>
<div class="t" style="top:420.13px;font-size:10px;color:#555;left:646.40px;transform:scaleX(0.8094);transform-origin:0 0;">[2]</div>
<div class="t" style="top:440.01px;font-size:12.5px;color:#9a9a9a;left:527.50px;transform:scaleX(0.9202);transform-origin:0 0;">Messaging convers…</div>
<div class="t" style="top:417.94px;font-size:14px;color:#303030;left:768.37px;transform:scaleX(0.9600);transform-origin:0 0;">5,831</div>
<div class="t" style="top:417.94px;font-size:14px;color:#303030;left:914.07px;transform:scaleX(0.9600);transform-origin:0 0;">7,020</div>
<div class="t" style="top:417.94px;font-size:14px;color:#303030;left:1045.97px;transform:scaleX(0.9600);transform-origin:0 0;">19.96</div>
<svg style="left:1037.67px;top:419.80px" width="6.40" height="10.00" viewBox="0 0 6.40 10.00"><g transform="scale(1.0000)" stroke="#303030" stroke-width="1.25" fill="none"><path d="M0 0.7H6.4M0 3H6.4"/><path d="M2.6 0.7C5.6 0.7 5.6 5 2.6 5H0.3"/><path d="M1.3 5L5.9 9.6" stroke-width="1.44"/></g></svg>
<div class="a" style="left:1036px;top:432px;width:43px;height:1px;background:repeating-linear-gradient(90deg,#444 0 1px,transparent 1px 2px);"></div>
<div class="t" style="top:420.13px;font-size:10px;color:#555;left:1084.60px;transform:scaleX(0.8094);transform-origin:0 0;">[2]</div>
<div class="t" style="top:440.01px;font-size:12.5px;color:#9a9a9a;left:965.70px;transform:scaleX(0.9163);transform-origin:0 0;">Per messaging con…</div>
<div class="t" style="top:417.94px;font-size:14px;color:#303030;left:1197.49px;transform:scaleX(0.9600);transform-origin:0 0;">159.69</div>
<svg style="left:1189.19px;top:419.80px" width="6.40" height="10.00" viewBox="0 0 6.40 10.00"><g transform="scale(1.0000)" stroke="#303030" stroke-width="1.25" fill="none"><path d="M0 0.7H6.4M0 3H6.4"/><path d="M2.6 0.7C5.6 0.7 5.6 5 2.6 5H0.3"/><path d="M1.3 5L5.9 9.6" stroke-width="1.44"/></g></svg>
<div class="a" style="left:1249px;top:412px;width:65px;height:46px;overflow:hidden">
<div class="t" style="left:53.40000000000009px;top:5.94px;font-size:14px;color:#303030;transform:scaleX(0.78);transform-origin:0 0">Ongoing</div>
</div>
<div class="a" style="left:76px;top:469px;width:24px;height:24px;border:1px solid #cfcfcf;border-radius:5px;background:#fff"></div>
<div class="a" style="left:137px;top:470px;width:37px;height:22px;border:1px solid #c3cad4;border-radius:11px;background:#e6effb"></div>
<div class="a" style="left:154px;top:471px;width:20.3px;height:20.3px;background:#1877f2;border-radius:10.15px;"></div>
<div class="t" style="top:463.52px;font-size:14.5px;color:#1f63cf;left:207.90px;transform:scaleX(0.9619);transform-origin:0 0;">New messages campaign</div>
<div class="t" style="top:463.94px;font-size:14px;color:#303030;left:633.93px;transform:scaleX(0.9600);transform-origin:0 0;">2</div>
<div class="a" style="left:633px;top:478px;width:8px;height:1px;background:repeating-linear-gradient(90deg,#444 0 1px,transparent 1px 2px);"></div>
<div class="t" style="top:466.13px;font-size:10px;color:#555;left:646.40px;transform:scaleX(0.8094);transform-origin:0 0;">[2]</div>
<div class="t" style="top:486.01px;font-size:12.5px;color:#9a9a9a;left:527.50px;transform:scaleX(0.9202);transform-origin:0 0;">Messaging convers…</div>
<div class="t" style="top:463.94px;font-size:14px;color:#303030;left:768.37px;transform:scaleX(0.9600);transform-origin:0 0;">1,815</div>
<div class="t" style="top:463.94px;font-size:14px;color:#303030;left:914.07px;transform:scaleX(0.9600);transform-origin:0 0;">1,979</div>
<div class="t" style="top:463.94px;font-size:14px;color:#303030;left:1045.97px;transform:scaleX(0.9600);transform-origin:0 0;">30.41</div>
<svg style="left:1037.67px;top:465.80px" width="6.40" height="10.00" viewBox="0 0 6.40 10.00"><g transform="scale(1.0000)" stroke="#303030" stroke-width="1.25" fill="none"><path d="M0 0.7H6.4M0 3H6.4"/><path d="M2.6 0.7C5.6 0.7 5.6 5 2.6 5H0.3"/><path d="M1.3 5L5.9 9.6" stroke-width="1.44"/></g></svg>
<div class="a" style="left:1036px;top:478px;width:43px;height:1px;background:repeating-linear-gradient(90deg,#444 0 1px,transparent 1px 2px);"></div>
<div class="t" style="top:466.13px;font-size:10px;color:#555;left:1084.60px;transform:scaleX(0.8094);transform-origin:0 0;">[2]</div>
<div class="t" style="top:486.01px;font-size:12.5px;color:#9a9a9a;left:965.70px;transform:scaleX(0.9163);transform-origin:0 0;">Per messaging con…</div>
<div class="t" style="top:463.94px;font-size:14px;color:#303030;left:1204.97px;transform:scaleX(0.9600);transform-origin:0 0;">60.82</div>
<svg style="left:1196.67px;top:465.80px" width="6.40" height="10.00" viewBox="0 0 6.40 10.00"><g transform="scale(1.0000)" stroke="#303030" stroke-width="1.25" fill="none"><path d="M0 0.7H6.4M0 3H6.4"/><path d="M2.6 0.7C5.6 0.7 5.6 5 2.6 5H0.3"/><path d="M1.3 5L5.9 9.6" stroke-width="1.44"/></g></svg>
<div class="a" style="left:1249px;top:458px;width:65px;height:46px;overflow:hidden">
<div class="t" style="left:53.40000000000009px;top:5.94px;font-size:14px;color:#303030;transform:scaleX(0.78);transform-origin:0 0">Ongoing</div>
</div>
<div class="a" style="left:76px;top:515px;width:24px;height:24px;border:1px solid #cfcfcf;border-radius:5px;background:#fff"></div>
<div class="a" style="left:137px;top:516px;width:37px;height:22px;border:1px solid #c3cad4;border-radius:11px;background:#e6effb"></div>
<div class="a" style="left:154px;top:517px;width:20.3px;height:20.3px;background:#1877f2;border-radius:10.15px;"></div>
<div class="t" style="top:509.52px;font-size:14.5px;color:#1f63cf;left:207.90px;transform:scaleX(0.9619);transform-origin:0 0;">New messages campaign</div>
<div class="t" style="top:509.94px;font-size:14px;color:#303030;left:626.45px;transform:scaleX(0.9600);transform-origin:0 0;">34</div>
<div class="a" style="left:626px;top:524px;width:16px;height:1px;background:repeating-linear-gradient(90deg,#444 0 1px,transparent 1px 2px);"></div>
<div class="t" style="top:512.13px;font-size:10px;color:#555;left:646.40px;transform:scaleX(0.8094);transform-origin:0 0;">[2]</div>
<div class="t" style="top:532.01px;font-size:12.5px;color:#9a9a9a;left:527.50px;transform:scaleX(0.9202);transform-origin:0 0;">Messaging convers…</div>
<div class="t" style="top:509.94px;font-size:14px;color:#303030;left:768.37px;transform:scaleX(0.9600);transform-origin:0 0;">5,433</div>
<div class="t" style="top:509.94px;font-size:14px;color:#303030;left:914.07px;transform:scaleX(0.9600);transform-origin:0 0;">6,475</div>
<div class="t" style="top:509.94px;font-size:14px;color:#303030;left:1053.45px;transform:scaleX(0.9600);transform-origin:0 0;">5.89</div>
<svg style="left:1045.15px;top:511.80px" width="6.40" height="10.00" viewBox="0 0 6.40 10.00"><g transform="scale(1.0000)" stroke="#303030" stroke-width="1.25" fill="none"><path d="M0 0.7H6.4M0 3H6.4"/><path d="M2.6 0.7C5.6 0.7 5.6 5 2.6 5H0.3"/><path d="M1.3 5L5.9 9.6" stroke-width="1.44"/></g></svg>
<div class="a" style="left:1044px;top:524px;width:36px;height:1px;background:repeating-linear-gradient(90deg,#444 0 1px,transparent 1px 2px);"></div>
<div class="t" style="top:512.13px;font-size:10px;color:#555;left:1084.60px;transform:scaleX(0.8094);transform-origin:0 0;">[2]</div>
<div class="t" style="top:532.01px;font-size:12.5px;color:#9a9a9a;left:965.70px;transform:scaleX(0.9163);transform-origin:0 0;">Per messaging con…</div>
<div class="t" style="top:509.94px;font-size:14px;color:#303030;left:1197.49px;transform:scaleX(0.9600);transform-origin:0 0;">200.13</div>
<svg style="left:1189.19px;top:511.80px" width="6.40" height="10.00" viewBox="0 0 6.40 10.00"><g transform="scale(1.0000)" stroke="#303030" stroke-width="1.25" fill="none"><path d="M0 0.7H6.4M0 3H6.4"/><path d="M2.6 0.7C5.6 0.7 5.6 5 2.6 5H0.3"/><path d="M1.3 5L5.9 9.6" stroke-width="1.44"/></g></svg>
<div class="a" style="left:1249px;top:504px;width:65px;height:46px;overflow:hidden">
<div class="t" style="left:53.40000000000009px;top:5.94px;font-size:14px;color:#303030;transform:scaleX(0.78);transform-origin:0 0">Ongoing</div>
</div>
<div class="a" style="left:76px;top:561px;width:24px;height:24px;border:1px solid #cfcfcf;border-radius:5px;background:#fff"></div>
<div class="a" style="left:137px;top:562px;width:37px;height:22px;border:1px solid #c3cad4;border-radius:11px;background:#e6effb"></div>
<div class="a" style="left:154px;top:563px;width:20.3px;height:20.3px;background:#1877f2;border-radius:10.15px;"></div>
<div class="t" style="top:555.52px;font-size:14.5px;color:#1f63cf;left:207.90px;transform:scaleX(0.9619);transform-origin:0 0;">New messages campaign</div>
<div class="t" style="top:555.94px;font-size:14px;color:#303030;left:626.45px;transform:scaleX(0.9600);transform-origin:0 0;">16</div>
<div class="a" style="left:626px;top:570px;width:16px;height:1px;background:repeating-linear-gradient(90deg,#444 0 1px,transparent 1px 2px);"></div>
<div class="t" style="top:558.13px;font-size:10px;color:#555;left:646.40px;transform:scaleX(0.8094);transform-origin:0 0;">[2]</div>
<div class="t" style="top:578.01px;font-size:12.5px;color:#9a9a9a;left:527.50px;transform:scaleX(0.9202);transform-origin:0 0;">Messaging convers…</div>
<div class="t" style="top:555.94px;font-size:14px;color:#303030;left:768.37px;transform:scaleX(0.9600);transform-origin:0 0;">3,582</div>
<div class="t" style="top:555.94px;font-size:14px;color:#303030;left:914.07px;transform:scaleX(0.9600);transform-origin:0 0;">3,937</div>
<div class="t" style="top:555.94px;font-size:14px;color:#303030;left:1053.45px;transform:scaleX(0.9600);transform-origin:0 0;">7.82</div>
<svg style="left:1045.15px;top:557.80px" width="6.40" height="10.00" viewBox="0 0 6.40 10.00"><g transform="scale(1.0000)" stroke="#303030" stroke-width="1.25" fill="none"><path d="M0 0.7H6.4M0 3H6.4"/><path d="M2.6 0.7C5.6 0.7 5.6 5 2.6 5H0.3"/><path d="M1.3 5L5.9 9.6" stroke-width="1.44"/></g></svg>
<div class="a" style="left:1044px;top:570px;width:36px;height:1px;background:repeating-linear-gradient(90deg,#444 0 1px,transparent 1px 2px);"></div>
<div class="t" style="top:558.13px;font-size:10px;color:#555;left:1084.60px;transform:scaleX(0.8094);transform-origin:0 0;">[2]</div>
<div class="t" style="top:578.01px;font-size:12.5px;color:#9a9a9a;left:965.70px;transform:scaleX(0.9163);transform-origin:0 0;">Per messaging con…</div>
<div class="t" style="top:555.94px;font-size:14px;color:#303030;left:1197.49px;transform:scaleX(0.9600);transform-origin:0 0;">125.04</div>
<svg style="left:1189.19px;top:557.80px" width="6.40" height="10.00" viewBox="0 0 6.40 10.00"><g transform="scale(1.0000)" stroke="#303030" stroke-width="1.25" fill="none"><path d="M0 0.7H6.4M0 3H6.4"/><path d="M2.6 0.7C5.6 0.7 5.6 5 2.6 5H0.3"/><path d="M1.3 5L5.9 9.6" stroke-width="1.44"/></g></svg>
<div class="a" style="left:1249px;top:550px;width:65px;height:46px;overflow:hidden">
<div class="t" style="left:53.40000000000009px;top:5.94px;font-size:14px;color:#303030;transform:scaleX(0.78);transform-origin:0 0">Ongoing</div>
</div>
<div class="a" style="left:76px;top:607px;width:24px;height:24px;border:1px solid #cfcfcf;border-radius:5px;background:#fff"></div>
<div class="a" style="left:137px;top:608px;width:37px;height:22px;border:1px solid #c3cad4;border-radius:11px;background:#e6effb"></div>
<div class="a" style="left:154px;top:609px;width:20.3px;height:20.3px;background:#1877f2;border-radius:10.15px;"></div>
<div class="t" style="top:601.52px;font-size:14.5px;color:#1f63cf;left:207.90px;transform:scaleX(0.9616);transform-origin:0 0;">New messages campaign – Copy</div>
<div class="t" style="top:601.94px;font-size:14px;color:#303030;left:626.45px;transform:scaleX(0.9600);transform-origin:0 0;">15</div>
<div class="a" style="left:626px;top:616px;width:16px;height:1px;background:repeating-linear-gradient(90deg,#444 0 1px,transparent 1px 2px);"></div>
<div class="t" style="top:604.13px;font-size:10px;color:#555;left:646.40px;transform:scaleX(0.8094);transform-origin:0 0;">[2]</div>
<div class="t" style="top:624.01px;font-size:12.5px;color:#9a9a9a;left:527.50px;transform:scaleX(0.9202);transform-origin:0 0;">Messaging convers…</div>
<div class="t" style="top:601.94px;font-size:14px;color:#303030;left:768.37px;transform:scaleX(0.9600);transform-origin:0 0;">1,560</div>
<div class="t" style="top:601.94px;font-size:14px;color:#303030;left:914.07px;transform:scaleX(0.9600);transform-origin:0 0;">1,868</div>
<div class="t" style="top:601.94px;font-size:14px;color:#303030;left:1053.45px;transform:scaleX(0.9600);transform-origin:0 0;">9.45</div>
<svg style="left:1045.15px;top:603.80px" width="6.40" height="10.00" viewBox="0 0 6.40 10.00"><g transform="scale(1.0000)" stroke="#303030" stroke-width="1.25" fill="none"><path d="M0 0.7H6.4M0 3H6.4"/><path d="M2.6 0.7C5.6 0.7 5.6 5 2.6 5H0.3"/><path d="M1.3 5L5.9 9.6" stroke-width="1.44"/></g></svg>
<div class="a" style="left:1044px;top:616px;width:36px;height:1px;background:repeating-linear-gradient(90deg,#444 0 1px,transparent 1px 2px);"></div>
<div class="t" style="top:604.13px;font-size:10px;color:#555;left:1084.60px;transform:scaleX(0.8094);transform-origin:0 0;">[2]</div>
<div class="t" style="top:624.01px;font-size:12.5px;color:#9a9a9a;left:965.70px;transform:scaleX(0.9163);transform-origin:0 0;">Per messaging con…</div>
<div class="t" style="top:601.94px;font-size:14px;color:#303030;left:1197.49px;transform:scaleX(0.9600);transform-origin:0 0;">141.73</div>
<svg style="left:1189.19px;top:603.80px" width="6.40" height="10.00" viewBox="0 0 6.40 10.00"><g transform="scale(1.0000)" stroke="#303030" stroke-width="1.25" fill="none"><path d="M0 0.7H6.4M0 3H6.4"/><path d="M2.6 0.7C5.6 0.7 5.6 5 2.6 5H0.3"/><path d="M1.3 5L5.9 9.6" stroke-width="1.44"/></g></svg>
<div class="a" style="left:1249px;top:596px;width:65px;height:46px;overflow:hidden">
<div class="t" style="left:53.40000000000009px;top:5.94px;font-size:14px;color:#303030;transform:scaleX(0.78);transform-origin:0 0">Ongoing</div>
</div>
</div>
<div class="a" style="left:64px;top:626px;width:1250px;height:4px;background:linear-gradient(180deg,rgba(0,0,0,0),rgba(0,0,0,0.09));"></div>
<div class="a" style="left:64px;top:629px;width:1250px;height:1px;background:#e2e2e2;"></div>
<div class="a" style="left:198px;top:630px;width:1px;height:62px;background:#dcdcdc;"></div>
<div class="a" style="left:664px;top:630px;width:1px;height:62px;background:#dcdcdc;"></div>
<div class="a" style="left:810px;top:630px;width:1px;height:62px;background:#dcdcdc;"></div>
<div class="a" style="left:956px;top:630px;width:1px;height:62px;background:#dcdcdc;"></div>
<div class="a" style="left:1102px;top:630px;width:1px;height:62px;background:#dcdcdc;"></div>
<div class="a" style="left:1248px;top:630px;width:1px;height:62px;background:#dcdcdc;"></div>
<div class="a" style="left:519px;top:630px;width:1px;height:62px;background:#d4d4d4;"></div>
<div class="a" style="left:520px;top:630px;width:4px;height:62px;background:linear-gradient(90deg,rgba(0,0,0,0.07),rgba(0,0,0,0));"></div>
<div class="a" style="left:64px;top:692px;width:1250px;height:1px;background:#e4e4e4;"></div>
<div class="t" style="top:638.24px;font-size:14px;color:#303030;font-weight:bold;left:211.60px;transform:scaleX(0.9449);transform-origin:0 0;">Results from 455 campaigns</div>
<svg style="left:396px;top:640.5px;" width="12" height="12" viewBox="0 0 12 12"><circle cx="6" cy="6" r="6" fill="#444"/><circle cx="6" cy="3.2" r="1.1" fill="#fff"/><path d="M6 5.2V9.6M4.6 5.6H6M4.6 9.4H7.4" stroke="#fff" stroke-width="1.6"/></svg>
<div class="t" style="top:659.81px;font-size:12.5px;color:#9a9a9a;left:211.60px;transform:scaleX(0.9507);transform-origin:0 0;">Excludes deleted items</div>
<div class="a" style="left:648px;top:644px;width:9.5px;height:2px;background:#444;"></div>
<div class="t" style="top:659.81px;font-size:12.5px;color:#9a9a9a;left:547.40px;transform:scaleX(0.9713);transform-origin:0 0;">Multiple conversions</div>
<div class="t" style="top:637.94px;font-size:14px;color:#303030;font-weight:bold;left:733.60px;transform:scaleX(0.9904);transform-origin:0 0;">12,363,857</div>
<div class="a" style="left:734px;top:652px;width:69px;height:1px;background:repeating-linear-gradient(90deg,#444 0 1px,transparent 1px 2px);"></div>
<div class="t" style="top:659.81px;font-size:12.5px;color:#9a9a9a;left:675.00px;transform:scaleX(0.9289);transform-origin:0 0;">Accounts Centre acco…</div>
<div class="t" style="top:637.94px;font-size:14px;color:#303030;font-weight:bold;left:879.30px;transform:scaleX(1.0019);transform-origin:0 0;">42,967,735</div>
<div class="t" style="top:659.81px;font-size:12.5px;color:#9a9a9a;left:923.80px;transform:scaleX(0.9735);transform-origin:0 0;">Total</div>
<div class="a" style="left:1085.5px;top:644px;width:10px;height:2px;background:#444;"></div>
<div class="t" style="top:659.81px;font-size:12.5px;color:#9a9a9a;left:986.10px;transform:scaleX(0.9669);transform-origin:0 0;">Multiple conversions</div>
<div class="t" style="top:637.94px;font-size:14px;color:#303030;font-weight:bold;left:1172.00px;transform:scaleX(0.9933);transform-origin:0 0;">626,371.09</div>
<svg style="left:1163.80px;top:639.80px" width="6.40" height="10.00" viewBox="0 0 6.40 10.00"><g transform="scale(1.0000)" stroke="#303030" stroke-width="1.90" fill="none"><path d="M0 0.7H6.4M0 3H6.4"/><path d="M2.6 0.7C5.6 0.7 5.6 5 2.6 5H0.3"/><path d="M1.3 5L5.9 9.6" stroke-width="2.18"/></g></svg>
<div class="t" style="top:659.81px;font-size:12.5px;color:#9a9a9a;left:1182.30px;transform:scaleX(0.9482);transform-origin:0 0;">Total Spent</div>
<div class="a" style="left:433px;top:696px;width:824px;height:7px;background:#c1c1c1;border-radius:3.5px;"></div>
</body></html>
